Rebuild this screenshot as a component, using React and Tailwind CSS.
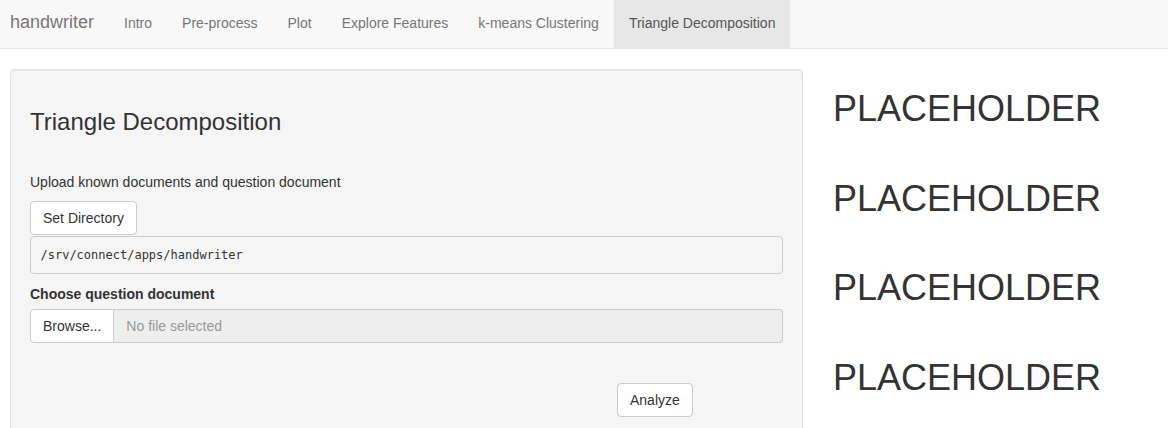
export default function App() {
  const sans = { fontFamily: '"Liberation Sans", Arial, sans-serif' };
  const tabs = ["Intro", "Pre-process", "Plot", "Explore Features", "k-means Clustering"];
  return (
    <div className="h-[428px] overflow-hidden bg-white text-[14px] leading-[20px] text-[#333]" style={sans}>
      <nav className="flex h-[49px] border-b border-[#e7e7e7] bg-[#f8f8f8]">
        <div className="pl-[10px] pr-[15px] pt-[12px] text-[18px] leading-[20px] text-[#777]">handwriter</div>
        {tabs.map((t) => (
          <div key={t} className="px-[15px] pt-[13px] text-[14px] leading-[20px] text-[#777]">{t}</div>
        ))}
        <div className="bg-[#e7e7e7] px-[15px] pt-[13px] text-[14px] leading-[20px] text-[#555]">Triangle Decomposition</div>
      </nav>
      <div className="flex pt-[20px]">
        <div className="w-[803px] shrink-0 pl-[10px]">
          <div className="h-[400px] rounded-[4px] border border-[#e3e3e3] bg-[#f5f5f5] px-[19px] pt-[19px] shadow-[inset_0_1px_1px_rgba(0,0,0,0.05)]">
            <h3 className="mt-[20px] mb-[10px] text-[24px] font-normal leading-[26.4px] text-[#333]">Triangle Decomposition</h3>
            <div className="mt-[37px]">Upload known documents and question document</div>
            <div className="mt-[9px]">
              <button className="h-[34px] rounded-[4px] border border-[#ccc] bg-white px-[12px] text-[14px] leading-[20px] text-[#333]">Set Directory</button>
            </div>
            <pre
              className="mt-[1px] mb-[10px] rounded-[4px] border border-[#ccc] bg-[#f5f5f5] px-[9.5px] py-[9px] text-[12px] leading-[18px] text-[#333]"
              style={{ fontFamily: '"DejaVu Sans Mono", "Liberation Mono", monospace' }}
            >/srv/connect/apps/handwriter</pre>
            <label className="mb-[5px] block font-bold">Choose question document</label>
            <div className="flex h-[34px]">
              <div className="flex items-center rounded-l-[4px] border border-[#ccc] bg-white px-[12px] text-[#333]">Browse...</div>
              <div className="flex flex-1 items-center rounded-r-[4px] border border-l-0 border-[#ccc] bg-[#eee] px-[12px] text-[#999]">No file selected</div>
            </div>
            <div className="mt-[40px] pl-[587px]">
              <button className="h-[34px] rounded-[4px] border border-[#ccc] bg-white px-[12px] text-[14px] leading-[20px] text-[#333]">Analyze</button>
            </div>
          </div>
        </div>
        <div className="flex flex-col gap-[50px] pl-[30px] pt-[20px]">
          {[0, 1, 2, 3].map((i) => (
            <h1 key={i} className="text-[36px] font-normal leading-[39.6px] text-[#333]">PLACEHOLDER</h1>
          ))}
        </div>
      </div>
    </div>
  );
}
